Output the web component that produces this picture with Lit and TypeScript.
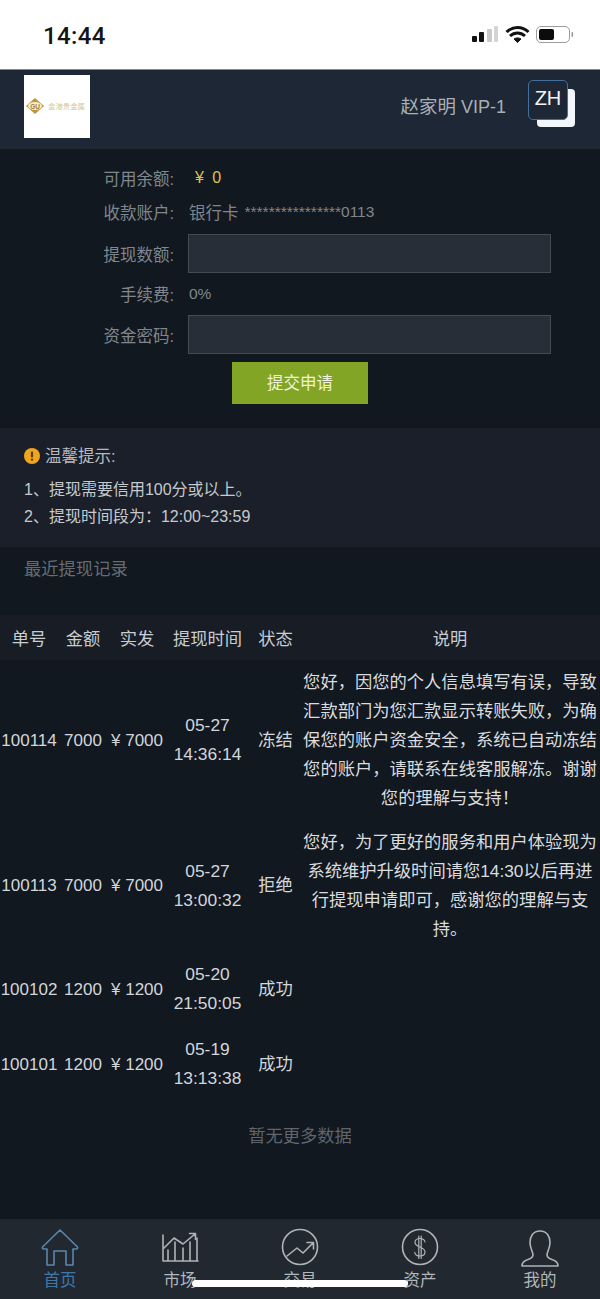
import { LitElement, html, css, svg } from "lit";
import { customElement } from "lit/decorators.js";

const rows = [
  { id: "100114", amt: "7000", paid: "¥ 7000", d: "05-27", t: "14:36:14", st: "冻结", note: "您好，因您的个人信息填写有误，导致汇款部门为您汇款显示转账失败，为确保您的账户资金安全，系统已自动冻结您的账户，请联系在线客服解冻。谢谢您的理解与支持！" },
  { id: "100113", amt: "7000", paid: "¥ 7000", d: "05-27", t: "13:00:32", st: "拒绝", note: "您好，为了更好的服务和用户体验现为系统维护升级时间请您14:30以后再进行提现申请即可，感谢您的理解与支持。" },
  { id: "100102", amt: "1200", paid: "¥ 1200", d: "05-20", t: "21:50:05", st: "成功", note: "" },
  { id: "100101", amt: "1200", paid: "¥ 1200", d: "05-19", t: "13:13:38", st: "成功", note: "" },
];

const icons = {
  home: svg`<path d="M20 3 L2.5 20 Q2 22 4 22 L7 22 V38 H14 V24 H26 V38 H33 V22 L36 22 Q38 22 37.5 20 Z"/>`,
  market: svg`<path d="M3 8 V34 H38 M8 34 V23 M15 34 V15 M23 34 V21 M30 34 V15 M37 34 V11"/><path d="M4 21 L14 11 L23 17 L35 7 M29.5 6.5 H35.5 V12.5"/>`,
  trade: svg`<circle cx="20" cy="20" r="17.5"/><path d="M7 29 L17 21 L23 26 L33 16 M27 15.5 H33.5 V22"/>`,
  asset: svg`<circle cx="20" cy="20" r="17.5"/><path d="M25 15 C24.5 12.5 22.5 11.5 20 11.5 C17 11.5 15 13 15 15.5 C15 21 25 19 25 25 C25 27.5 23 29 20 29 C17 29 15.2 27.7 14.7 25.3 M18.8 9 V31.5 M21.2 9 V31.5" stroke-width="1.2"/>`,
  me: svg`<path d="M20 4 C13 4 10 9.5 10 15.5 C10 21.5 13 24.5 13 28 C13 30.5 11 31.5 8 32.5 C4.5 33.5 2 35.5 2 39 H38 C38 35.5 35.5 33.5 32 32.5 C29 31.5 27 30.5 27 28 C27 24.5 30 21.5 30 15.5 C30 9.5 27 4 20 4 Z"/>`,
};

const tabs = [
  { k: "home", l: "首页", on: true },
  { k: "market", l: "市场", on: false },
  { k: "trade", l: "交易", on: false },
  { k: "asset", l: "资产", on: false },
  { k: "me", l: "我的", on: false },
] as const;

@customElement("app-root")
export class AppRoot extends LitElement {
  static styles = css`
    :host {
      display: block;
      width: 600px;
      height: 1299px;
      position: relative;
      overflow: hidden;
      font-family: "Liberation Sans", "Noto Sans CJK SC", sans-serif;
      background: #111820;
    }
    .page { display: flex; flex-direction: column; height: 1299px; }
    .status {
      flex: none; background: #fff;
      display: flex; align-items: center; justify-content: space-between;
      padding: 0 24px 0 43px; box-sizing: border-box;
      border-bottom: 1px solid #7d8b98; height: 70px;
    }
    .clock { font-family: Roboto, "Liberation Sans", sans-serif; font-size: 24px; font-weight: 500; color: #151515; letter-spacing: 0.4px; margin-top: 2px; }
    .status svg { display: block; margin-top: 2px; }
    .head {
      height: 79px; flex: none; background: #1e2735; box-sizing: border-box;
      border-bottom: 2px solid #1e2a2e;
      display: flex; align-items: flex-start; padding: 5px 24px 0 24px;
    }
    .logo {
      width: 66px; height: 63px; background: #fff; flex: none;
      display: flex; align-items: center; padding: 0 0 2px 2px; box-sizing: border-box;
    }
    .logo span { font-size: 7.4px; color: #d4c995; white-space: nowrap; margin-left: 4px; }
    .user { margin-left: auto; margin-top: 19px; font-size: 18px; line-height: 26px; color: #a9afb6; }
    .user b { font-weight: 400; font-size: 18.5px; }
    .lang { position: relative; width: 48px; height: 47px; margin-left: 22px; margin-top: 5px; flex: none; }
    .lang .back { position: absolute; left: 9px; top: 9px; width: 38px; height: 38px; background: #f3f6fa; border-radius: 4px; }
    .lang .front {
      position: absolute; left: 0; top: 0; width: 40px; height: 40px; box-sizing: border-box;
      background: #1e2735; border: 1px solid #44719b; border-radius: 5px;
      color: #f2f4f6; font-size: 20px; line-height: 34px; text-align: center;
    }
    .form { flex: none; height: 279px; box-sizing: border-box; padding-top: 12px; background: #111820; }
    .row { display: flex; align-items: center; height: 34px; font-size: 16.5px; color: #80868c; }
    .row.tall { height: 42px; }
    .row.field { height: 39px; margin-top: 5px; }
    .lab { width: 176px; text-align: right; flex: none; padding-right: 2px; box-sizing: border-box; }
    .val { margin-left: 13px; white-space: pre; font-size: 15.5px; }
    .val.cjk { font-size: 16.5px; }
    .gold { color: #e3c14e; font-size: 16px; margin-left: 19px; word-spacing: 4px; }
    .stars { font-size: 15.5px; margin-left: 6px; }
    .input { width: 363px; height: 39px; box-sizing: border-box; background: #282e37; border: 1px solid #454b53; margin-left: 12px; }
    .row.tall + .row.field { margin-top: 0; }
    .btn {
      display: block; width: 136px; height: 42px; margin: 8px 0 0 232px;
      background: #83a526; color: #eef2dc; font-size: 16.5px; line-height: 42px; text-align: center;
    }
    .tips { height: 119px; flex: none; background: #1a1f29; box-sizing: border-box; padding: 14px 24px 0; color: #c6c9cd; font-size: 16px; }
    .tips .t { display: flex; align-items: center; gap: 5px; line-height: 28px; margin-bottom: 6px; font-size: 16.5px; color: #b6babf; }
    .tips .l { line-height: 27px; }
    .rec { height: 68px; flex: none; box-sizing: border-box; padding: 8px 24px 0; line-height: 29px; font-size: 17.3px; color: #666c73; }
    table { border-collapse: collapse; table-layout: fixed; width: 600px; flex: none; color: #d3d6da; font-size: 17px; }
    th { height: 45px; padding: 0; font-weight: 400; background: #171c25; color: #c9ccd1; font-size: 17.3px; white-space: nowrap; }
    td { padding: 7.5px 0; line-height: 29px; text-align: center; white-space: nowrap; }
    td.note { white-space: normal; font-size: 17.3px; color: #dadcdf; }
    td.cjk { font-size: 17.3px; }
    td.time { font-size: 17.4px; }
    .st { padding-left: 2px; }
    tr.tall td { padding: 8px 0; }
    tr.short td { height: 60px; padding-top: 8px; padding-bottom: 7px; }
    .more { text-align: center; padding-top: 20.5px; line-height: 29px; font-size: 17.3px; color: #5f656c; }
    .grow { flex: 1; }
    .tabbar {
      height: 80px; flex: none; box-sizing: border-box; background: #212830; border-top: 1px solid #2c2230;
      display: grid; grid-template-columns: repeat(5, 120px);
    }
    .tab { display: flex; flex-direction: column; align-items: center; padding-top: 7px; color: #b2b7bc; font-size: 16.5px; line-height: 20px; }
    .tab.on { color: #3f78a8; }
    .tab svg { display: block; width: 40px; height: 40px; fill: none; stroke: #aeb3b8; stroke-width: 1.6; stroke-linejoin: round; stroke-linecap: round; margin-bottom: 3px; }
    .tab.on svg { stroke: #5a86ae; }
    .indicator { position: absolute; left: 192px; top: 1280px; width: 216px; height: 7px; border-radius: 4px; background: #fff; }
  `;

  render() {
    return html`
      <div class="page">
        <div class="status">
          <div class="clock">14:44</div>
          <svg width="104" height="20" viewBox="0 0 104 20">
            <rect x="0" y="10" width="5" height="6" rx="1" fill="#111"/>
            <rect x="7" y="6" width="5" height="10" rx="1" fill="#111"/>
            <rect x="15" y="3" width="5" height="13" rx="1" fill="#c9c9c9"/>
            <rect x="22" y="0" width="4" height="16" rx="1" fill="#d4d4d4"/>
            <path d="M34.5 6 C41 0 50 0 56.5 6 M38 10 C42.5 6 48.5 6 53 10" fill="none" stroke="#111" stroke-width="3"/>
            <path d="M42 13 C44 11.5 47 11.5 49 13 L45.5 16.5 Z" fill="#111" stroke="#111" stroke-width="1"/>
            <rect x="64.5" y="0.5" width="33" height="16" rx="4.5" fill="#fff" stroke="#9c9c9c"/>
            <rect x="67" y="3" width="15" height="11" rx="2" fill="#0c0c0c"/>
            <rect x="99.5" y="6" width="1.6" height="5" rx="0.8" fill="#9c9c9c"/>
          </svg>
        </div>
        <div class="head">
          <div class="logo">
            <svg width="18" height="16" viewBox="0 0 18 16">
              <path d="M9 0 L18 8 L9 16 L0 8 Z" fill="#bd9440"/>
              <ellipse cx="9" cy="8" rx="7" ry="4" fill="#f4ecd6"/>
              <text x="9" y="10.5" font-size="6.5" font-weight="700" text-anchor="middle" fill="#a67e2c">GU</text>
            </svg>
            <span>金港贵金属</span>
          </div>
          <div class="user"><b>赵家明</b> VIP-1</div>
          <div class="lang"><div class="back"></div><div class="front">ZH</div></div>
        </div>
        <div class="form">
          <div class="row"><div class="lab">可用余额:</div><div class="gold">¥ 0</div></div>
          <div class="row"><div class="lab">收款账户:</div><div class="val cjk">银行卡</div><div class="stars">****************0113</div></div>
          <div class="row field"><div class="lab">提现数额:</div><div class="input"></div></div>
          <div class="row tall"><div class="lab">手续费:</div><div class="val">0%</div></div>
          <div class="row field"><div class="lab">资金密码:</div><div class="input"></div></div>
          <div class="btn">提交申请</div>
        </div>
        <div class="tips">
          <div class="t">
            <svg width="16" height="16" viewBox="0 0 16 16">
              <circle cx="8" cy="8" r="8" fill="#f0a51e"/>
              <rect x="6.9" y="3.5" width="2.2" height="6" rx="1" fill="#5a3a10"/>
              <circle cx="8" cy="11.6" r="1.2" fill="#5a3a10"/>
            </svg>
            <span>温馨提示:</span>
          </div>
          <div class="l">1、提现需要信用100分或以上。</div>
          <div class="l">2、提现时间段为：12:00~23:59</div>
        </div>
        <div class="rec">最近提现记录</div>
        <table>
          <colgroup>
            <col style="width:58px" /><col style="width:50px" /><col style="width:58px" /><col style="width:83px" /><col style="width:51px" /><col style="width:300px" />
          </colgroup>
          <thead>
            <tr><th>单号</th><th>金额</th><th>实发</th><th>提现时间</th><th class="st">状态</th><th>说明</th></tr>
          </thead>
          <tbody>
            ${rows.map(
              (r) => html`
                <tr class=${r.note ? "" : "short"}>
                  <td>${r.id}</td>
                  <td>${r.amt}</td>
                  <td>${r.paid}</td>
                  <td class="time">${r.d}<br />${r.t}</td>
                  <td class="cjk st">${r.st}</td>
                  <td class="note">${r.note}</td>
                </tr>
              `
            )}
          </tbody>
        </table>
        <div class="more">暂无更多数据</div>
        <div class="grow"></div>
        <div class="tabbar">
          ${tabs.map(
            (t) => html`
              <div class="tab ${t.on ? "on" : ""}">
                <svg viewBox="0 0 40 40">${icons[t.k]}</svg>
                <span>${t.l}</span>
              </div>
            `
          )}
        </div>
      </div>
      <div class="indicator"></div>
    `;
  }
}
